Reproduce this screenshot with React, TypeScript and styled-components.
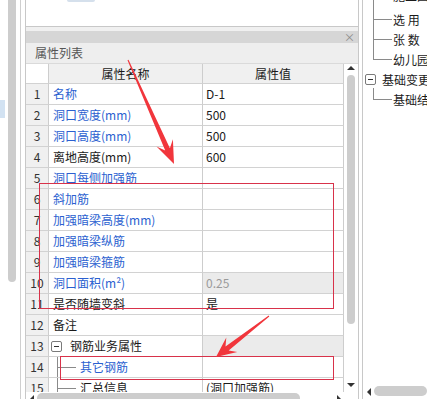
import React from "react";
import styled, { createGlobalStyle } from "styled-components";

const Global = createGlobalStyle`
  html, body { margin: 0; padding: 0; background: #fff; overflow: hidden; }
  body {
    width: 427px; height: 399px;
    font-family: "Noto Sans CJK SC", "Microsoft YaHei", sans-serif;
    font-size: 12px; color: #1a1a1a;
  }
`;

const Page = styled.div`
  position: relative;
  width: 427px;
  height: 399px;
  overflow: hidden;
  display: flex;
  background: #fff;
`;

const LeftStrip = styled.div`
  width: 21px;
  flex: none;
  box-sizing: border-box;
  border-right: 1px solid #cfcfcf;
  display: flex;
  align-items: flex-start;
  gap: 3px;
`;

const SelectedMark = styled.div`
  width: 5px;
  height: 18px;
  margin-top: 100px;
  background: #d2e2f2;
`;

const StripThumb = styled.div`
  width: 8px;
  height: 282px;
  background: #cdcdcd;
  border-radius: 0 0 4px 4px;
`;

const Gutter = styled.div<{ $w: number }>`
  width: ${(p) => p.$w}px;
  flex: none;
`;

const MainCol = styled.div`
  width: 334px;
  flex: none;
  box-sizing: border-box;
  display: flex;
  flex-direction: column;
  border-left: 1px solid #c8c8c8;
  border-right: 1px solid #c8c8c8;
`;

const TopPanel = styled.div`
  height: 27px;
  flex: none;
  box-sizing: border-box;
  border-bottom: 1px solid #c8c8c8;
  padding-left: 41px;
  display: flex;
  align-items: flex-start;
`;

const TabStub = styled.div`
  width: 28px;
  height: 2px;
  background: #d5e0ec;
  border-radius: 0 0 2px 2px;
`;

const Spacer = styled.div`
  height: 4px;
  flex: none;
  background: #f0f0f0;
`;

const TitleBar = styled.div`
  height: 12px;
  flex: none;
  background: #d6d6d6;
  display: flex;
  justify-content: flex-end;
  align-items: center;
  padding-right: 3px;
  color: #8a8a8a;
  font-size: 11px;
  line-height: 12px;
`;

const ListHeader = styled.div`
  height: 21px;
  flex: none;
  box-sizing: border-box;
  background: #eeeeee;
  border-bottom: 1px solid #dadada;
  padding-left: 9px;
  line-height: 20px;
  color: #555;
`;

const Body = styled.div`
  height: 328px;
  flex: none;
  display: flex;
  overflow: hidden;
`;

const Grid = styled.div`
  width: 318px;
  flex: none;
  display: grid;
  grid-template-columns: 23px 154px 141px;
  grid-template-rows: 20px;
  grid-auto-rows: 21px;
  align-content: start;
`;

type CellKind = "headnum" | "head" | "num" | "name" | "value";

const Cell = styled.div<{ $kind: CellKind; $gray?: boolean; $blue?: boolean; $muted?: boolean }>`
  box-sizing: border-box;
  border-right: 1px solid #cdcdcd;
  border-bottom: 1px solid #d2d2d2;
  white-space: nowrap;
  overflow: hidden;
  position: relative;
  background: ${(p) =>
    p.$kind === "num" || p.$kind === "head" ? "#f0f0f0" : p.$gray ? "#ebebeb" : "#fff"};
  color: ${(p) => (p.$muted ? "#9a9a9a" : p.$blue ? "#2b5fd0" : p.$kind === "num" ? "#333" : "#1a1a1a")};
  text-align: ${(p) => (p.$kind === "num" || p.$kind === "head" ? "center" : "left")};
  padding-left: ${(p) => (p.$kind === "name" ? "4px" : p.$kind === "value" ? "3px" : "0")};
  line-height: ${(p) => (p.$kind === "head" || p.$kind === "headnum" ? "19px" : "20px")};
`;

const GroupLabel = styled.span`
  display: flex;
  height: 20px;
  align-items: center;
  gap: 8px;
  margin-left: -2px;
`;

const ToggleBox = styled.span`
  width: 11px;
  height: 11px;
  flex: none;
  box-sizing: border-box;
  border: 1px solid #7a7a7a;
  border-radius: 2px;
  display: inline-flex;
  align-items: center;
  justify-content: center;
  background: #fff;
  &::after {
    content: "";
    width: 5px;
    height: 1px;
    background: #333;
  }
`;

const Branch = styled.span`
  display: block;
  padding-left: 27px;
  &::before {
    content: "";
    position: absolute;
    left: 8px;
    top: 0;
    bottom: -1px;
    border-left: 1px solid #8a8a8a;
  }
  &::after {
    content: "";
    position: absolute;
    left: 8px;
    top: 10px;
    width: 19px;
    border-top: 1px solid #8a8a8a;
  }
`;

const VScroll = styled.div`
  width: 14px;
  flex: none;
  display: flex;
  flex-direction: column;
  align-items: center;
`;

const ArrowUp = styled.div`
  margin-top: 2px;
  width: 0;
  height: 0;
  border-left: 4px solid transparent;
  border-right: 4px solid transparent;
  border-bottom: 4px solid #333;
`;

const ArrowDown = styled.div`
  margin-bottom: 5px;
  width: 0;
  height: 0;
  border-left: 4px solid transparent;
  border-right: 4px solid transparent;
  border-top: 4px solid #333;
`;

const VThumb = styled.div`
  margin-top: 5px;
  width: 8px;
  height: 249px;
  background: #cdcdcd;
  border-radius: 4px;
`;

const Fill = styled.div`
  flex: 1;
`;

const HScroll = styled.div<{ $pad: number }>`
  height: 14px;
  flex: none;
  display: flex;
  align-items: flex-start;
  padding-top: 1px;
  padding-left: ${(p) => p.$pad}px;
  box-sizing: border-box;
`;

const ArrowLeft = styled.div`
  margin-top: 2px;
  width: 0;
  height: 0;
  border-top: 4px solid transparent;
  border-bottom: 4px solid transparent;
  border-right: 4px solid #333;
`;

const ArrowRight = styled.div`
  margin-top: 2px;
  margin-left: 37px;
  width: 0;
  height: 0;
  border-top: 4px solid transparent;
  border-bottom: 4px solid transparent;
  border-left: 4px solid #333;
`;

const HThumb = styled.div<{ $w?: number }>`
  margin-left: 3px;
  height: 10px;
  ${(p) => (p.$w ? `width: ${p.$w}px;` : "flex: 1;")}
  background: #cdcdcd;
  border-radius: 5px;
`;

const RightPanel = styled.div`
  flex: 1;
  min-width: 0;
  box-sizing: border-box;
  border-left: 1px solid #c8c8c8;
  display: flex;
  flex-direction: column;
  overflow: hidden;
`;

const Tree = styled.div`
  margin-top: -11px;
  display: flex;
  flex-direction: column;
`;

const TreeRow = styled.div<{ $kind: "branch" | "last" | "parent"; $lift?: boolean }>`
  height: 20px;
  flex: none;
  box-sizing: border-box;
  position: relative;
  display: flex;
  align-items: center;
  white-space: nowrap;
  gap: 6px;
  padding-left: ${(p) => (p.$kind === "parent" ? "2px" : "30px")};
  padding-bottom: ${(p) => (p.$lift ? "7px" : "0")};
  color: #1a1a1a;
  ${(p) =>
    p.$kind !== "parent"
      ? `
    &::before {
      content: "";
      position: absolute;
      left: 10px;
      top: -1px;
      height: ${p.$kind === "last" ? "11px" : "21px"};
      border-left: 1px solid #8a8a8a;
    }
    &::after {
      content: "";
      position: absolute;
      left: 10px;
      top: 10px;
      width: 19px;
      border-top: 1px solid #8a8a8a;
    }
  `
      : ""}
`;

const Overlay = styled.svg`
  position: absolute;
  left: 0;
  top: 0;
  pointer-events: none;
`;

function arrowPoints(
  tx: number,
  ty: number,
  px: number,
  py: number,
  head: number,
  headW: number,
  notch: number,
  neckW: number,
  tailW: number
) {
  const dx = px - tx;
  const dy = py - ty;
  const L = Math.hypot(dx, dy);
  const ux = dx / L;
  const uy = dy / L;
  const nx = -uy;
  const ny = ux;
  const pt = (d: number, w: number) => [px - ux * d + nx * w, py - uy * d + ny * w];
  const pts = [
    [tx + nx * tailW, ty + ny * tailW],
    pt(notch, neckW),
    pt(head, headW),
    [px, py],
    pt(head, -headW),
    pt(notch, -neckW),
    [tx - nx * tailW, ty - ny * tailW],
  ];
  return pts.map((p) => p.map((v) => v.toFixed(1)).join(",")).join(" ");
}

type Row = {
  name: string;
  value?: string;
  blue?: boolean;
  gray?: boolean;
  muted?: boolean;
  tree?: "group" | "child";
};

const rows: Row[] = [
  { name: "名称", value: "D-1", blue: true },
  { name: "洞口宽度(mm)", value: "500", blue: true },
  { name: "洞口高度(mm)", value: "500", blue: true },
  { name: "离地高度(mm)", value: "600" },
  { name: "洞口每侧加强筋", blue: true },
  { name: "斜加筋", blue: true },
  { name: "加强暗梁高度(mm)", blue: true },
  { name: "加强暗梁纵筋", blue: true },
  { name: "加强暗梁箍筋", blue: true },
  { name: "洞口面积(m²)", value: "0.25", blue: true, gray: true, muted: true },
  { name: "是否随墙变斜", value: "是" },
  { name: "备注" },
  { name: "钢筋业务属性", gray: true, tree: "group" },
  { name: "其它钢筋", blue: true, tree: "child" },
  { name: "汇总信息", value: "(洞口加强筋)", tree: "child" },
];

const treeItems: { text: string; kind: "branch" | "last" | "parent" }[] = [
  { text: "施工图说明", kind: "branch" },
  { text: "选 用", kind: "branch" },
  { text: "张 数", kind: "branch" },
  { text: "幼儿园基础", kind: "last" },
  { text: "基础变更设计", kind: "parent" },
  { text: "基础结构", kind: "last" },
];

export default function App() {
  const red = "#f1363c";
  return (
    <>
      <Global />
      <Page>
        <LeftStrip>
          <SelectedMark />
          <StripThumb />
        </LeftStrip>
        <Gutter $w={4} />
        <MainCol>
          <TopPanel>
            <TabStub />
          </TopPanel>
          <Spacer />
          <TitleBar>×</TitleBar>
          <ListHeader>属性列表</ListHeader>
          <Body>
            <Grid>
              <Cell $kind="headnum" />
              <Cell $kind="head">属性名称</Cell>
              <Cell $kind="head">属性值</Cell>
              {rows.map((r, i) => (
                <React.Fragment key={i}>
                  <Cell $kind="num">{i + 1}</Cell>
                  <Cell $kind="name" $blue={r.blue}>
                    {r.tree === "group" ? (
                      <GroupLabel>
                        <ToggleBox />
                        {r.name}
                      </GroupLabel>
                    ) : r.tree === "child" ? (
                      <Branch>{r.name}</Branch>
                    ) : (
                      r.name
                    )}
                  </Cell>
                  <Cell $kind="value" $gray={r.gray} $muted={r.muted}>
                    {r.value}
                  </Cell>
                </React.Fragment>
              ))}
            </Grid>
            <VScroll>
              <ArrowUp />
              <VThumb />
              <Fill />
              <ArrowDown />
            </VScroll>
          </Body>
          <HScroll $pad={4}>
            <ArrowLeft />
            <HThumb $w={263} />
            <ArrowRight />
          </HScroll>
        </MainCol>
        <Gutter $w={3} />
        <RightPanel>
          <Tree>
            {treeItems.map((t, i) => (
              <TreeRow key={i} $kind={t.kind} $lift={i === 0}>
                {t.kind === "parent" && <ToggleBox />}
                {t.text}
              </TreeRow>
            ))}
          </Tree>
          <Fill />
          <HScroll $pad={4}>
            <ArrowLeft />
            <HThumb />
          </HScroll>
        </RightPanel>
        <Overlay width={427} height={399} viewBox="0 0 427 399">
          <rect x={39.5} y={183.5} width={294} height={125} fill="none" stroke="#d8324a" strokeWidth={1} />
          <rect x={60.5} y={356.5} width={273} height={23} fill="none" stroke="#d8324a" strokeWidth={1} />
          <polygon points={arrowPoints(128, 60, 174, 164, 23, 9, 16, 2.6, 0.5)} fill={red} />
          <polygon points={arrowPoints(269, 316, 216, 357, 20, 9, 14, 2.6, 0.5)} fill={red} />
        </Overlay>
      </Page>
    </>
  );
}
